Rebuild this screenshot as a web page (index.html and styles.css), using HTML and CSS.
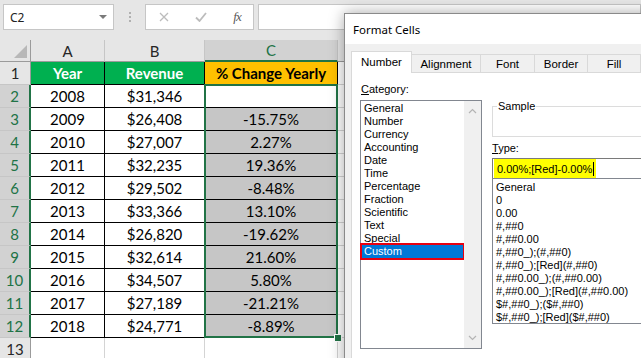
FILE: index.html
```html
<!DOCTYPE html>
<html lang="en">
<head>
    <meta charset="UTF-8">
    <title>Format Cells - Custom</title>
    <link rel="stylesheet" href="styles.css">
</head>
<body>
    <div class="formula-bar">
        <div class="name-box"><span>C2</span><span class="caret"></span></div>
        <div class="grip"><i></i><i></i><i></i></div>
        <div class="fx-box">
            <span class="fx-btn">
                <svg width="10" height="10" viewBox="0 0 10 10"><path d="M1 1L9 9M9 1L1 9" stroke="#bcbcbc" stroke-width="1.3" fill="none"/></svg>
            </span>
            <span class="fx-btn">
                <svg width="12" height="10" viewBox="0 0 12 10"><path d="M1 5.5L4.5 9L11 1" stroke="#bcbcbc" stroke-width="1.8" fill="none"/></svg>
            </span>
            <span class="fx-btn fx">fx</span>
        </div>
        <div class="formula-input"></div>
    </div>

    <div class="sheet">
        <div class="grid">
            <!-- column headers -->
            <div class="h corner">
                <svg width="13" height="13" viewBox="0 0 13 13"><polygon points="13,0 13,13 0,13" fill="#b8b8b8"/></svg>
            </div>
            <div class="h">A</div>
            <div class="h">B</div>
            <div class="h sel">C</div>
            <div class="h last"></div>

            <div class="r">1</div>
            <div class="c green">Year</div>
            <div class="c green">Revenue</div>
            <div class="c yellow">% Change Yearly</div>
            <div class="e"></div>

            <div class="r sel">2</div>
            <div class="c">2008</div>
            <div class="c">$31,346</div>
            <div class="c"></div>
            <div class="e"></div>

            <div class="r sel">3</div>
            <div class="c">2009</div>
            <div class="c">$26,408</div>
            <div class="c grey">-15.75%</div>
            <div class="e"></div>

            <div class="r sel">4</div>
            <div class="c">2010</div>
            <div class="c">$27,007</div>
            <div class="c grey">2.27%</div>
            <div class="e"></div>

            <div class="r sel">5</div>
            <div class="c">2011</div>
            <div class="c">$32,235</div>
            <div class="c grey">19.36%</div>
            <div class="e"></div>

            <div class="r sel">6</div>
            <div class="c">2012</div>
            <div class="c">$29,502</div>
            <div class="c grey">-8.48%</div>
            <div class="e"></div>

            <div class="r sel">7</div>
            <div class="c">2013</div>
            <div class="c">$33,366</div>
            <div class="c grey">13.10%</div>
            <div class="e"></div>

            <div class="r sel">8</div>
            <div class="c">2014</div>
            <div class="c">$26,820</div>
            <div class="c grey">-19.62%</div>
            <div class="e"></div>

            <div class="r sel">9</div>
            <div class="c">2015</div>
            <div class="c">$32,614</div>
            <div class="c grey">21.60%</div>
            <div class="e"></div>

            <div class="r sel">10</div>
            <div class="c">2016</div>
            <div class="c">$34,507</div>
            <div class="c grey">5.80%</div>
            <div class="e"></div>

            <div class="r sel">11</div>
            <div class="c">2017</div>
            <div class="c">$27,189</div>
            <div class="c grey">-21.21%</div>
            <div class="e"></div>

            <div class="r sel">12</div>
            <div class="c">2018</div>
            <div class="c">$24,771</div>
            <div class="c grey">-8.89%</div>
            <div class="e"></div>

            <div class="r">13</div>
            <div class="e"></div>
            <div class="e"></div>
            <div class="e"></div>
            <div class="e"></div>
        </div>
        <div class="selection"></div>
        <div class="fill-handle"></div>
    </div>

    <div class="dialog">
        <div class="title">Format Cells</div>
        <div class="dialog-body">
            <div class="tabs">
                <div class="tab active">Number</div>
                <div class="tab w-align">Alignment</div>
                <div class="tab w-font">Font</div>
                <div class="tab w-border">Border</div>
                <div class="tab w-fill">Fill</div>
            </div>
            <div class="page">
                <div class="category">
                    <p class="label"><u>C</u>ategory:</p>
                    <div class="listbox">
                        <ul class="items">
                            <li>General</li>
                            <li>Number</li>
                            <li>Currency</li>
                            <li>Accounting</li>
                            <li>Date</li>
                            <li>Time</li>
                            <li>Percentage</li>
                            <li>Fraction</li>
                            <li>Scientific</li>
                            <li>Text</li>
                            <li>Special</li>
                            <li class="picked">Custom</li>
                        </ul>
                        <div class="scroll">
                            <svg width="9" height="6" viewBox="0 0 9 6"><path d="M1 5L4.5 1.5L8 5" stroke="#b4b4b4" stroke-width="1.2" fill="none"/></svg>
                            <svg width="9" height="6" viewBox="0 0 9 6"><path d="M1 1L4.5 4.5L8 1" stroke="#b4b4b4" stroke-width="1.2" fill="none"/></svg>
                        </div>
                    </div>
                </div>
                <div class="right">
                    <fieldset class="sample">
                        <legend>Sample</legend>
                    </fieldset>
                    <p class="label type-label"><u>T</u>ype:</p>
                    <div class="type-input"><span class="mark">0.00%;[Red]-0.00%</span></div>
                    <ul class="type-list">
                        <li>General</li>
                        <li>0</li>
                        <li>0.00</li>
                        <li>#,##0</li>
                        <li>#,##0.00</li>
                        <li>#,##0_);(#,##0)</li>
                        <li>#,##0_);[Red](#,##0)</li>
                        <li>#,##0.00_);(#,##0.00)</li>
                        <li>#,##0.00_);[Red](#,##0.00)</li>
                        <li>$#,##0_);($#,##0)</li>
                        <li>$#,##0_);[Red]($#,##0)</li>
                    </ul>
                </div>
            </div>
        </div>
    </div>
</body>
</html>
```

FILE: styles.css
```css
*{
    margin: 0;
    padding: 0;
    box-sizing: border-box;
}
body{
    width: 641px;
    height: 358px;
    overflow: hidden;
    position: relative;
    background-color: #e6e6e6;
    font-family: Lato, "Noto Sans", sans-serif;
    color: #000;
}

/* formula bar */
.formula-bar{
    height: 40px;
    display: flex;
    align-items: flex-start;
    padding: 4px 0 0 3px;
}
.name-box{
    width: 111px;
    height: 26px;
    background-color: #fff;
    border: 1px solid #c6c6c6;
    display: flex;
    align-items: center;
    justify-content: space-between;
    padding: 0 6px 0 6px;
    font: 12px "Noto Sans", sans-serif;
    color: #222;
}
.caret{
    border-left: 4px solid transparent;
    border-right: 4px solid transparent;
    border-top: 4px solid #7a7a7a;
}
.grip{
    width: 31px;
    height: 26px;
    display: flex;
    flex-direction: column;
    align-items: center;
    justify-content: center;
    gap: 2px;
}
.grip i{
    width: 2px;
    height: 2px;
    background-color: #b0b0b0;
}
.fx-box{
    width: 109px;
    height: 26px;
    background-color: #fff;
    border: 1px solid #c6c6c6;
    display: grid;
    grid-template-columns: 36px 37px 36px;
    align-items: center;
}
.fx-btn{
    display: flex;
    justify-content: center;
    align-items: center;
}
.fx{
    font: italic 13px "Liberation Serif", serif;
    color: #5a5a5a;
    letter-spacing: -1px;
}
.formula-input{
    flex: 1;
    height: 26px;
    margin-left: 4px;
    background-color: #fff;
    border: 1px solid #c6c6c6;
}

/* sheet */
.sheet{
    position: relative;
}
.grid{
    display: grid;
    grid-template-columns: 31px 74px 100px 133px 1fr;
    grid-template-rows: 22px repeat(12, 23px) 23px;
    font-size: 15px;
}
.grid > div{
    display: flex;
    align-items: center;
    justify-content: center;
}
.h{
    background-color: #e6e6e6;
    border-right: 1px solid #c6c6c6;
    border-bottom: 1px solid #9b9b9b;
    color: #262626;
}
.h.corner{
    justify-content: flex-end !important;
    align-items: flex-end !important;
    padding: 0 3px 3px 0;
    border-right-color: #9b9b9b;
}
.h.sel{
    background-color: #d2d2d2;
    color: #217346;
    border-bottom: 2px solid #217346;
}
.h.last{
    border-right: none;
}
.r{
    background-color: #e6e6e6;
    border-right: 1px solid #9b9b9b;
    border-bottom: 1px solid #c6c6c6;
    color: #262626;
}
.r.sel{
    background-color: #d2d2d2;
    color: #217346;
    border-right: 2px solid #217346;
}
.c{
    background-color: #fff;
    border-right: 1px solid #000;
    border-bottom: 1px solid #000;
}
.c.green{
    background-color: #00b050;
    color: #fff;
    font-weight: bold;
}
.c.yellow{
    background-color: #ffc000;
    font-weight: bold;
}
.c.grey{
    background-color: #c6c6c6;
}
.e{
    background-color: #fff;
    border-right: 1px solid #d4d4d4;
    border-bottom: 1px solid #d4d4d4;
}
.selection{
    position: absolute;
    left: 204px;
    top: 44px;
    width: 134px;
    height: 254px;
    border: 2px solid #217346;
}
.fill-handle{
    position: absolute;
    left: 334px;
    top: 294px;
    width: 8px;
    height: 8px;
    background-color: #217346;
    border: 1px solid #fff;
}

/* dialog */
.dialog{
    position: absolute;
    left: 344px;
    top: 13px;
    width: 340px;
    height: 380px;
    background-color: #f0f0f0;
    border: 1px solid #8a8a8a;
    box-shadow: 0 0 14px rgba(0, 0, 0, 0.35);
    font: 11px "Liberation Sans", Arial, sans-serif;
    color: #000;
}
.title{
    height: 30px;
    background-color: #fff;
    padding-left: 8px;
    display: flex;
    align-items: center;
    font: 11.5px "Noto Sans", sans-serif;
}
.dialog-body{
    padding: 7px 0 0 6px;
}
.tabs{
    display: flex;
    align-items: flex-end;
    height: 21px;
}
.tab{
    flex-shrink: 0;
    height: 18px;
    width: 54px;
    display: flex;
    align-items: center;
    justify-content: center;
    background-color: #f0f0f0;
    border: 1px solid #d9d9d9;
    border-left: none;
    border-bottom: none;
    font-size: 11.5px;
}
.tab.active{
    width: 61px;
    height: 22px;
    margin-bottom: -1px;
    background-color: #fff;
    border-left: 1px solid #d9d9d9;
    position: relative;
    padding-bottom: 2px;
}
.w-align{ width: 69px; }
.w-font{ width: 54px; }
.w-border{ width: 53px; }
.w-fill{ width: 53px; }

.page{
    height: 300px;
    background-color: #fff;
    border: 1px solid #d9d9d9;
    display: flex;
    gap: 10px;
    padding: 10px 0 0 8px;
}
.label{
    line-height: 13px;
    padding-left: 1px;
}
.category{
    flex-shrink: 0;
    width: 122px;
}
.listbox{
    margin-top: 4px;
    height: 249px;
    border: 1px solid #828790;
    display: flex;
}
.items{
    list-style: none;
    flex: 1;
    padding: 1px 1px 0 1px;
}
.items li{
    line-height: 13px;
    padding-left: 2px;
}
.items li.picked{
    background-color: #0078d7;
    color: #fff;
    outline: 2px solid #e8000f;
}
.scroll{
    width: 17px;
    background-color: #f0f0f0;
    display: flex;
    flex-direction: column;
    justify-content: space-between;
    align-items: center;
    padding: 7px 0 7px 0;
}
.right{
    flex-shrink: 0;
    width: 220px;
    padding-top: 17px;
}
.sample{
    height: 37px;
    border: 1px solid #dcdcdc;
    padding: 0;
}
.sample legend{
    margin-left: 4px;
    padding: 0 1px;
    line-height: 13px;
}
.type-label{
    margin-top: 5px;
    padding-left: 0;
}
.type-input{
    margin-top: 3px;
    height: 21px;
    border: 1px solid #7a7a7a;
    display: flex;
    padding-left: 1px;
}
.mark{
    display: flex;
    align-items: center;
    background-color: #ffff00;
    padding: 0 2px 0 3px;
}
.mark::after{
    content: "";
    width: 1px;
    height: 14px;
    background-color: #000;
    margin-left: 1px;
}
.type-list{
    list-style: none;
    margin-top: -1px;
    height: 146px;
    border: 1px solid #828790;
    padding: 2px 0 0 3px;
}
.type-list li{
    line-height: 13px;
}
```
